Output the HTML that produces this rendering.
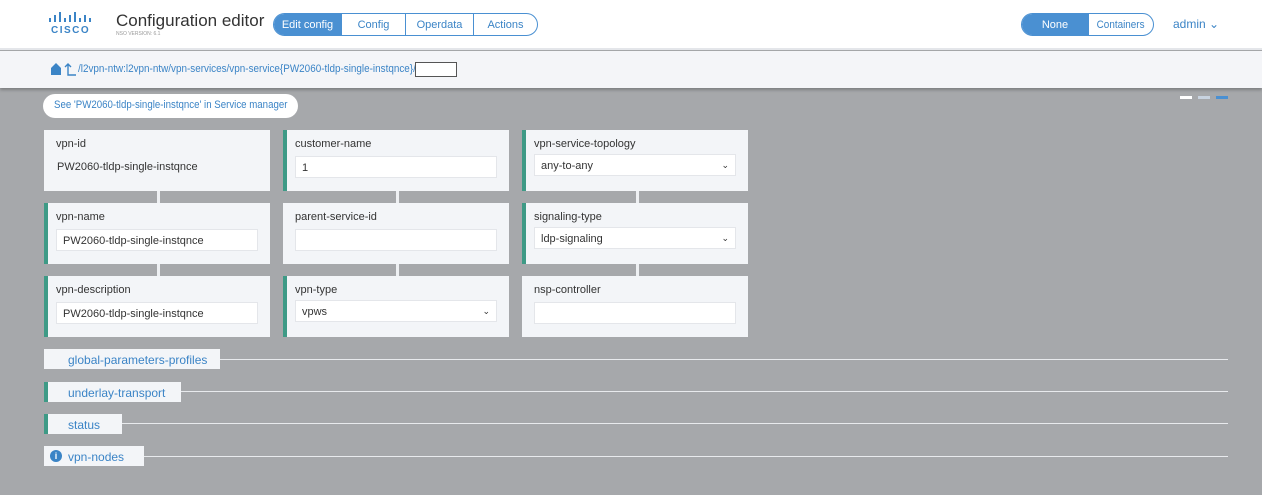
<!DOCTYPE html><html><head><style>
*{box-sizing:border-box;margin:0;padding:0}
body{width:1262px;height:495px;overflow:hidden;font-family:"Liberation Sans",sans-serif;background:#a6a8ab;position:relative}
.hdr{position:absolute;left:0;top:0;width:1262px;height:50px;background:#fff;border-bottom:2px solid #e4e6ea}
.bc{position:absolute;left:0;top:51px;width:1262px;height:37px;background:#f4f5f8;box-shadow:0 2px 3px rgba(0,0,0,.25)}
.abs{position:absolute;white-space:nowrap}
.seg{position:absolute;top:13px;height:23px;border:1px solid #4a90d2;border-radius:12px;display:flex;overflow:hidden;font-size:11px;color:#3b84c6}
.seg div{display:flex;align-items:center;justify-content:center;border-left:1px solid #4a90d2;white-space:nowrap}
.seg div:first-child{border-left:none;background:#4a90d2;color:#fff}
.card{position:absolute;width:226px;height:61px;background:#f3f5f8;font-size:11px;color:#333}
.card.g{border-left:4px solid #3e9a86}
.card .l{position:absolute;left:12px;top:8px}
.card.g .l{left:8px}
.inp{position:absolute;left:12px;top:26px;width:202px;height:22px;background:#fff;border:1px solid #e4e6ea;font-size:11px;padding:5px 6px;color:#333}
.card.g .inp{left:8px}
.conn{position:absolute;width:3px;height:13px;background:#eef0f3}
.sec{position:absolute;left:44px;height:20px;background:#f3f5f8;color:#3b84c6;font-size:12px;padding:4px 0 0 24px;white-space:nowrap}
.sec.g{border-left:4px solid #3e9a86;padding-left:20px}
.line{position:absolute;height:1px;background:#e8eaed;right:34px}
</style></head><body>
<div class="hdr"></div>
<div class="abs" style="left:48px;top:11px;width:46px;height:12px">
<svg width="46" height="12"><g fill="#3b84c6"><rect x="1" y="6" width="2" height="4"/><rect x="6" y="3" width="2" height="7"/><rect x="11" y="0" width="2" height="10"/><rect x="16" y="6" width="2" height="4"/><rect x="21" y="3" width="2" height="7"/><rect x="26" y="0" width="2" height="10"/><rect x="31" y="6" width="2" height="4"/><rect x="36" y="3" width="2" height="7"/><rect x="41" y="6" width="2" height="4"/></g></svg></div>
<div class="abs" style="left:51px;top:25px;font-size:10px;font-weight:bold;color:#3b84c6;letter-spacing:1.5px">CISCO</div>
<div class="abs" style="left:116px;top:11px;font-size:17px;color:#333">Configuration editor</div>
<div class="abs" style="left:116px;top:31px;font-size:5px;color:#999">NSO VERSION: 6.1</div>
<div class="seg" style="left:273px;width:265px"><div style="width:67px">Edit config</div><div style="width:64px">Config</div><div style="width:68px">Operdata</div><div style="flex:1">Actions</div></div>
<div class="seg" style="left:1021px;width:133px"><div style="width:66px">None</div><div style="flex:1"><span style="display:inline-block;transform:scaleX(0.9)">Containers</span></div></div>
<div class="abs" style="left:1173px;top:17px;font-size:12px;color:#3b84c6">admin ⌄</div>
<div class="bc"></div>
<svg class="abs" style="left:50px;top:62px" width="28" height="14"><path d="M1 6 L6 1 L11 6 V13 H1Z" fill="#3b84c6"/><path d="M18 2 V13 H26 M15 5 L18 2 L21 5" stroke="#3b84c6" fill="none" stroke-width="1.4"/></svg>
<div class="abs" style="left:78px;top:63px;font-size:11px;color:#3b84c6;transform:scaleX(0.9);transform-origin:0 0">/l2vpn-ntw:l2vpn-ntw/vpn-services/vpn-service{PW2060-tldp-single-instqnce}/</div>
<div class="abs" style="left:415px;top:62px;width:42px;height:15px;background:#fff;border:1px solid #555"></div>
<div class="abs" style="left:43px;top:94px;width:255px;height:24px;background:#fff;border-radius:12px"></div>
<div class="abs" style="left:54px;top:99px;font-size:11px;color:#3b84c6;transform:scaleX(0.88);transform-origin:0 0">See 'PW2060-tldp-single-instqnce' in Service manager</div>
<div class="abs" style="left:1180px;top:96px;width:12px;height:3px;background:#fff"></div>
<div class="abs" style="left:1198px;top:96px;width:12px;height:3px;background:#c8d3e0"></div>
<div class="abs" style="left:1216px;top:96px;width:12px;height:3px;background:#4a90d2"></div>

<div class="conn" style="left:157px;top:191px"></div><div class="conn" style="left:396px;top:191px"></div><div class="conn" style="left:636px;top:191px"></div>
<div class="conn" style="left:157px;top:264px"></div><div class="conn" style="left:396px;top:264px"></div><div class="conn" style="left:636px;top:264px"></div>

<div class="card" style="left:44px;top:130px"><span class="l">vpn-id</span><span class="abs" style="left:13px;top:31px">PW2060-tldp-single-instqnce</span></div>
<div class="card g" style="left:283px;top:130px"><span class="l">customer-name</span><div class="inp">1</div></div>
<div class="card g" style="left:522px;top:130px"><span class="l">vpn-service-topology</span><div class="inp" style="top:24px">any-to-any<span style="float:right;font-size:9px">⌄</span></div></div>
<div class="card g" style="left:44px;top:203px"><span class="l">vpn-name</span><div class="inp">PW2060-tldp-single-instqnce</div></div>
<div class="card" style="left:283px;top:203px"><span class="l">parent-service-id</span><div class="inp"></div></div>
<div class="card g" style="left:522px;top:203px"><span class="l">signaling-type</span><div class="inp" style="top:24px">ldp-signaling<span style="float:right;font-size:9px">⌄</span></div></div>
<div class="card g" style="left:44px;top:276px"><span class="l">vpn-description</span><div class="inp">PW2060-tldp-single-instqnce</div></div>
<div class="card g" style="left:283px;top:276px"><span class="l">vpn-type</span><div class="inp" style="top:24px">vpws<span style="float:right;font-size:9px">⌄</span></div></div>
<div class="card" style="left:522px;top:276px"><span class="l">nsp-controller</span><div class="inp"></div></div>

<div class="line" style="left:219px;top:359px"></div>
<div class="sec" style="top:349px;width:176px">global-parameters-profiles</div>
<div class="line" style="left:180px;top:391px"></div>
<div class="sec g" style="top:382px;width:137px">underlay-transport</div>
<div class="line" style="left:121px;top:423px"></div>
<div class="sec g" style="top:414px;width:78px">status</div>
<div class="line" style="left:144px;top:456px"></div>
<div class="sec" style="top:446px;width:100px">vpn-nodes</div>
<div class="abs" style="left:50px;top:450px;width:12px;height:12px;border-radius:50%;background:#3b84c6;color:#fff;font-size:9px;font-weight:bold;text-align:center;line-height:12px">i</div>
</body></html>
